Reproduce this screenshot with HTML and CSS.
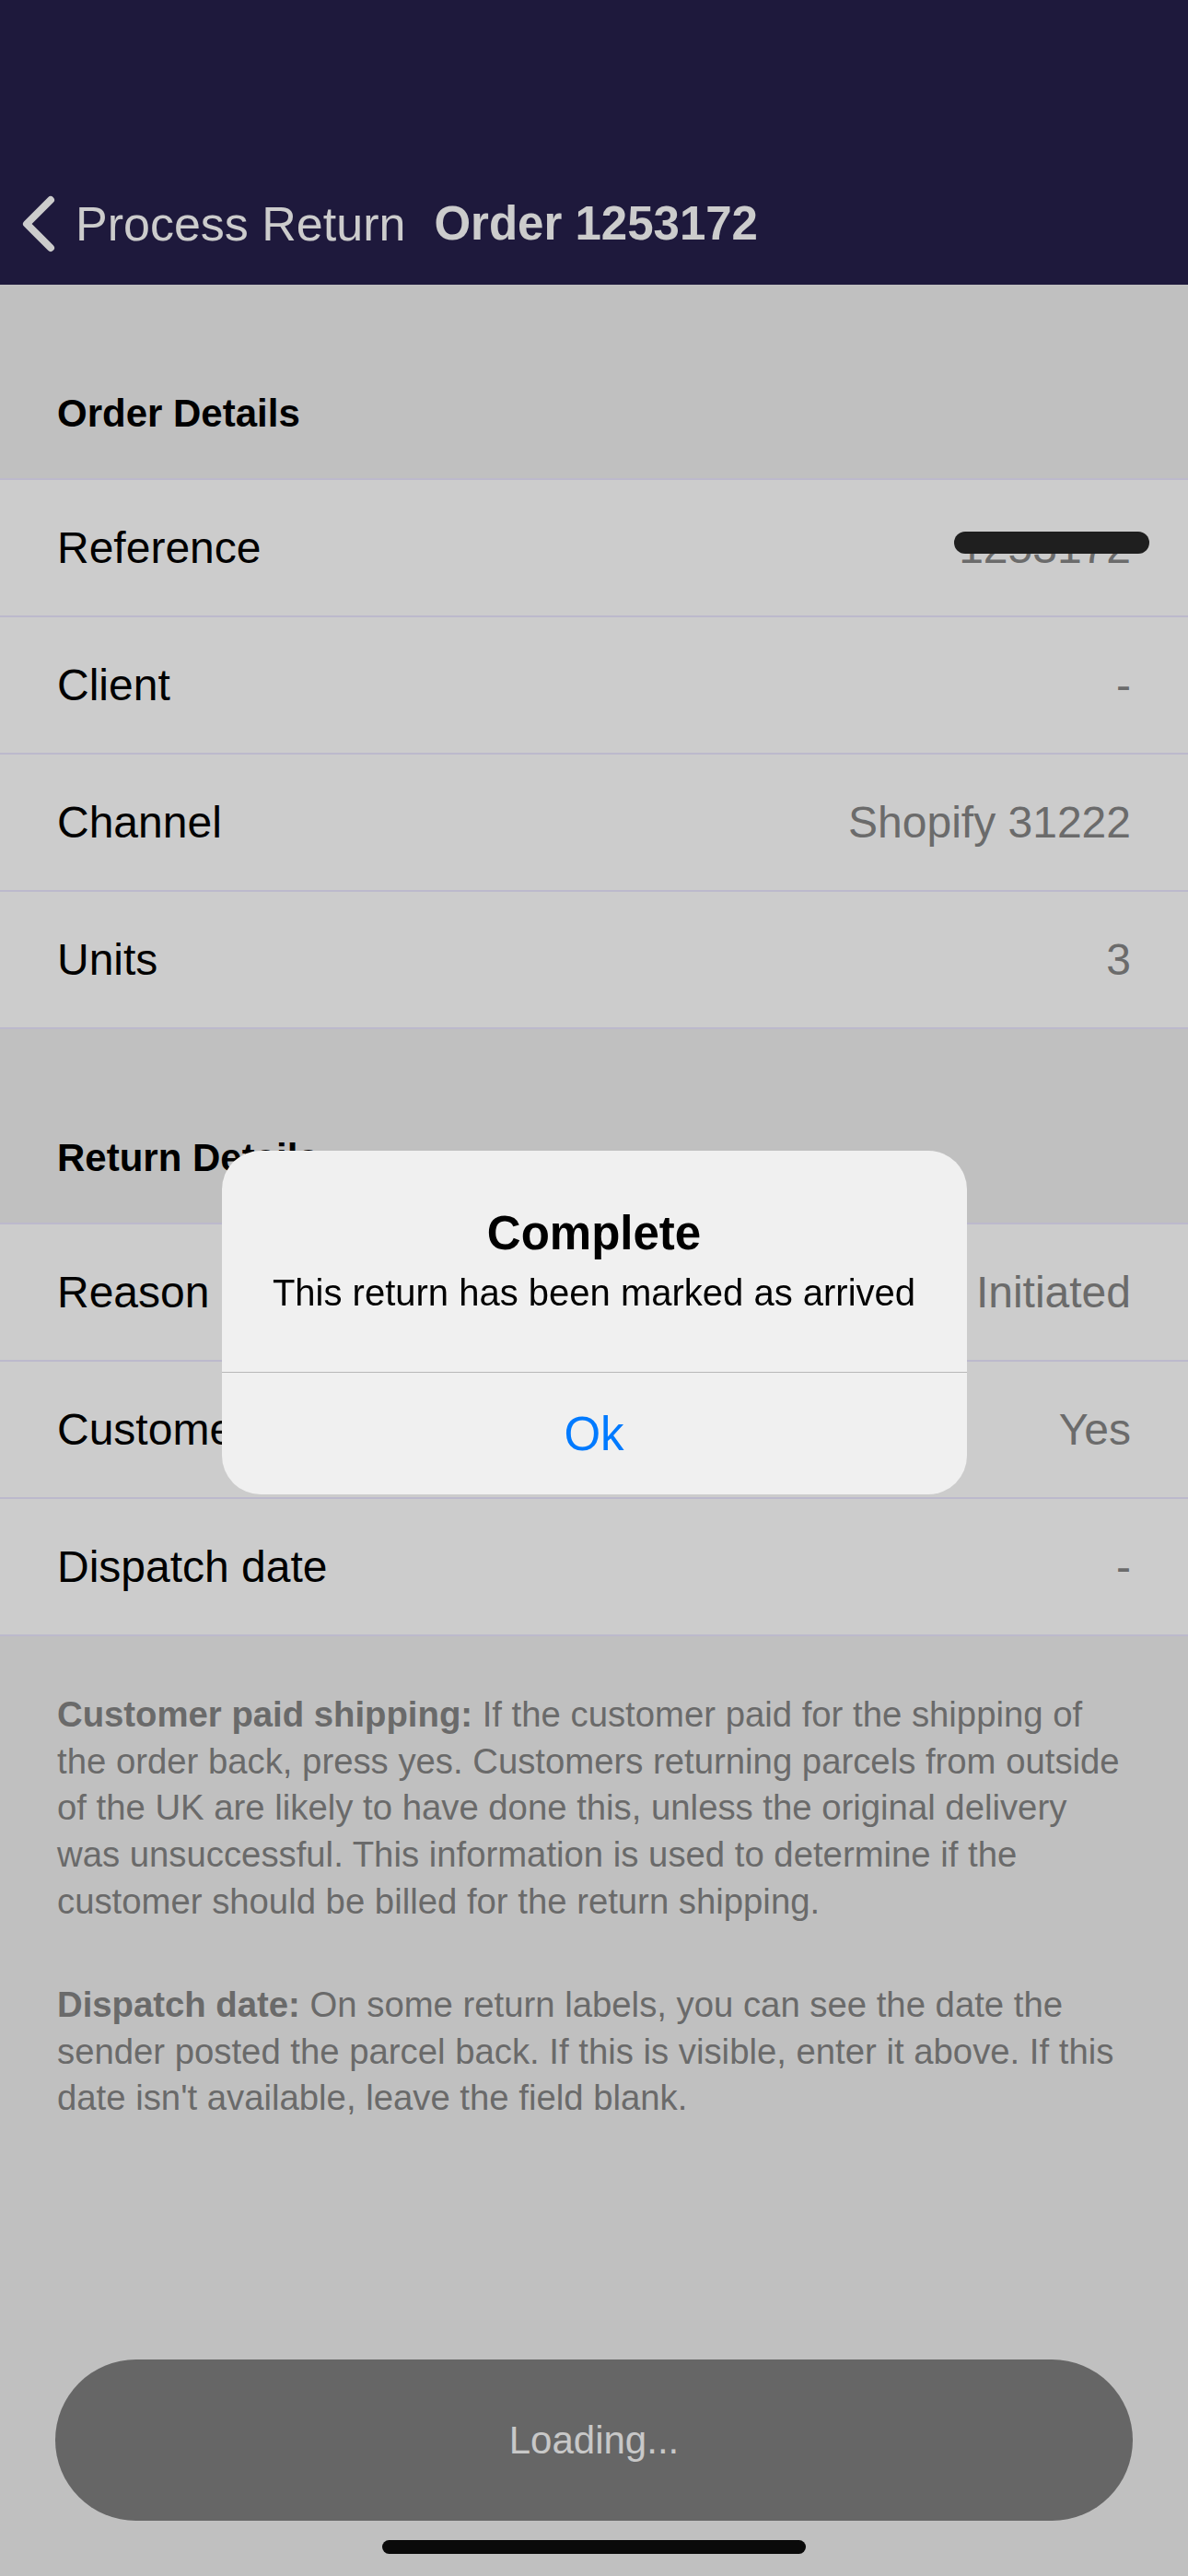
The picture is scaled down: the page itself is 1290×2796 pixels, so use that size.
FILE: index.html
```html
<!DOCTYPE html>
<html lang="en">
<head>
<meta charset="utf-8">
<title>Process Return – Order 1253172</title>
<link rel="stylesheet" href="styles.css">
</head>
<body>
<div class="screen">
  <header class="navbar">
    <div class="nav-inner">
      <svg class="chevron" width="36" height="62" viewBox="0 0 36 62" aria-hidden="true">
        <polyline points="31,5 5,31 31,57" fill="none" stroke="currentColor" stroke-width="8" stroke-linecap="round" stroke-linejoin="round"/>
      </svg>
      <span class="back-label">Process Return</span>
      <span class="nav-title">Order 1253172</span>
    </div>
  </header>

  <section class="group">
    <h2 class="group-header">Order Details</h2>
    <ul class="list">
      <li class="row"><span class="label">Reference</span><span class="value redacted">1253172<span class="redaction"></span></span></li>
      <li class="row"><span class="label">Client</span><span class="value">-</span></li>
      <li class="row"><span class="label">Channel</span><span class="value">Shopify 31222</span></li>
      <li class="row"><span class="label">Units</span><span class="value">3</span></li>
    </ul>
  </section>

  <section class="group">
    <h2 class="group-header">Return Details</h2>
    <ul class="list">
      <li class="row"><span class="label">Reason *</span><span class="value">Return Initiated</span></li>
      <li class="row"><span class="label">Customer paid shipping</span><span class="value">Yes</span></li>
      <li class="row"><span class="label">Dispatch date</span><span class="value">-</span></li>
    </ul>
  </section>

  <div class="notes">
    <p><strong>Customer paid shipping:</strong> If the customer paid for the shipping of the order back, press yes. Customers returning parcels from outside of the UK are likely to have done this, unless the original delivery was unsuccessful. This information is used to determine if the customer should be billed for the return shipping.</p>
    <p><strong>Dispatch date:</strong> On some return labels, you can see the date the sender posted the parcel back. If this is visible, enter it above. If this date isn't available, leave the field blank.</p>
  </div>

  <footer class="bottom">
    <button class="loading-btn" type="button">Loading...</button>
    <div class="home-indicator"></div>
  </footer>
</div>

<div class="overlay">
  <div class="alert" role="alertdialog">
    <div class="alert-body">
      <div class="alert-title">Complete</div>
      <div class="alert-message">This return has been marked as arrived</div>
    </div>
    <div class="alert-action">Ok</div>
  </div>
</div>
</body>
</html>
```

FILE: styles.css
```css
* {
  box-sizing: border-box;
}

html, body {
  margin: 0;
  padding: 0;
}

body {
  width: 1290px;
  height: 2796px;
  overflow: hidden;
  font-family: "Liberation Sans", Arial, sans-serif;
  background: #f1f1f1;
}

.screen {
  height: 2796px;
  display: flex;
  flex-direction: column;
  background: #f1f1f1;
}

/* Navigation bar */
.navbar {
  height: 309px;
  flex: 0 0 auto;
  background: #26204b;
  display: flex;
  align-items: flex-end;
  color: #ffffff;
}

.nav-inner {
  height: 132px;
  width: 100%;
  display: flex;
  align-items: center;
  padding-left: 24px;
}

.chevron {
  display: block;
  color: #ffffff;
  margin-right: 22px;
}

.back-label {
  font-size: 52px;
  line-height: 60px;
}

.nav-title {
  font-size: 51px;
  line-height: 60px;
  font-weight: 700;
  margin-left: 31px;
}

/* Groups */
.group-header {
  margin: 0;
  height: 210px;
  padding: 115px 62px 45px;
  font-size: 42px;
  line-height: 50px;
  font-weight: 700;
  color: #000;
}

.list {
  list-style: none;
  margin: 0;
  padding: 0;
  background: #ffffff;
  border-top: 2px solid #ebe8ff;
}

.row {
  height: 149px;
  padding: 0 62px;
  display: flex;
  align-items: center;
  justify-content: space-between;
  border-bottom: 2px solid #ebe8ff;
  font-size: 48px;
  line-height: 1.15;
  white-space: nowrap;
}

.label {
  color: #000;
}

.value {
  color: #868686;
}

.redacted {
  position: relative;
}

.redaction {
  position: absolute;
  left: -5px;
  right: -20px;
  top: 10px;
  height: 24px;
  border-radius: 12px;
  background: #272727;
}

/* Notes */
.notes {
  padding: 60px 62px 0;
  color: #858585;
  font-size: 38.3px;
  line-height: 50.7px;
}

.notes p {
  margin: 0 0 61.5px;
}

.notes strong {
  font-weight: 700;
}

/* Bottom */
.bottom {
  margin-top: auto;
  padding: 0 60px 24px;
  display: flex;
  flex-direction: column;
  align-items: center;
}

.loading-btn {
  width: 100%;
  height: 175px;
  border: none;
  border-radius: 88px;
  background: #808080;
  color: #fafafa;
  font-family: "Liberation Sans", Arial, sans-serif;
  font-size: 42px;
  padding: 0;
}

.home-indicator {
  margin-top: 21px;
  width: 460px;
  height: 15px;
  border-radius: 8px;
  background: #0d0d0d;
}

/* Alert overlay */
.overlay {
  position: fixed;
  inset: 0;
  background: rgba(0, 0, 0, 0.2);
  display: flex;
  justify-content: center;
  align-items: flex-start;
  padding-top: 1249px;
}

.alert {
  width: 809px;
  background: #f0f0f0;
  border-radius: 42px;
  overflow: hidden;
  text-align: center;
}

.alert-body {
  padding: 60px 40px 62px;
}

.alert-title {
  font-size: 51px;
  line-height: 60px;
  font-weight: 700;
  color: #000;
}

.alert-message {
  margin-top: 10px;
  font-size: 40px;
  line-height: 48px;
  color: #000;
}

.alert-action {
  height: 133px;
  border-top: 1px solid #b8b8b8;
  display: flex;
  align-items: center;
  justify-content: center;
  font-size: 51px;
  color: #007aff;
}
```
